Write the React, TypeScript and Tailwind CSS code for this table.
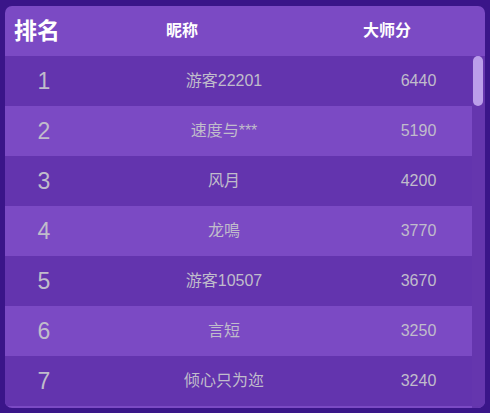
const rows = [
  { rank: 1, name: "游客22201", score: 6440 },
  { rank: 2, name: "速度与***", score: 5190 },
  { rank: 3, name: "风月", score: 4200 },
  { rank: 4, name: "龙鳴", score: 3770 },
  { rank: 5, name: "游客10507", score: 3670 },
  { rank: 6, name: "言短", score: 3250 },
  { rank: 7, name: "倾心只为迩", score: 3240 },
];

export default function App() {
  return (
    <div
      className="w-[490px] h-[413px] bg-[#3a1589] pl-[5px] pt-[6px]"
      style={{ fontFamily: '"Liberation Sans", "Noto Sans CJK SC", sans-serif' }}
    >
      <div className="w-[480px] h-[402px] rounded-[7px] bg-[#7b4ac4] overflow-hidden flex flex-col">
        {/* Header */}
        <div className="h-[50px] shrink-0 flex items-center text-white font-bold">
          <div className="w-[156px] pl-[9px] text-[23px]">排名</div>
          <div className="w-[200px] pl-[5px] text-[16px]">昵称</div>
          <div className="text-[16px] pl-[2px]">大师分</div>
        </div>

        {/* Body */}
        <div className="flex flex-1 min-h-0">
          <div className="w-[467px]">
            {rows.map((r, i) => (
              <div
                key={r.rank}
                className={
                  "h-[50px] flex items-center text-[#c0bccb] " +
                  (i % 2 === 0 ? "bg-[#6334ae]" : "bg-[#7b4ac4]")
                }
              >
                <div className="w-[78px] text-center text-[23px]">{r.rank}</div>
                <div className="w-[282px] text-center text-[16px]">{r.name}</div>
                <div className="w-[107px] text-center text-[16px]">{r.score}</div>
              </div>
            ))}
          </div>
          <div className="w-[13px] bg-[#6536ae] rounded-br-[7px] pl-[1px] pr-[2px]">
            <div className="h-[50px] rounded-full bg-[#bb9eea]" />
          </div>
        </div>
      </div>
    </div>
  );
}
